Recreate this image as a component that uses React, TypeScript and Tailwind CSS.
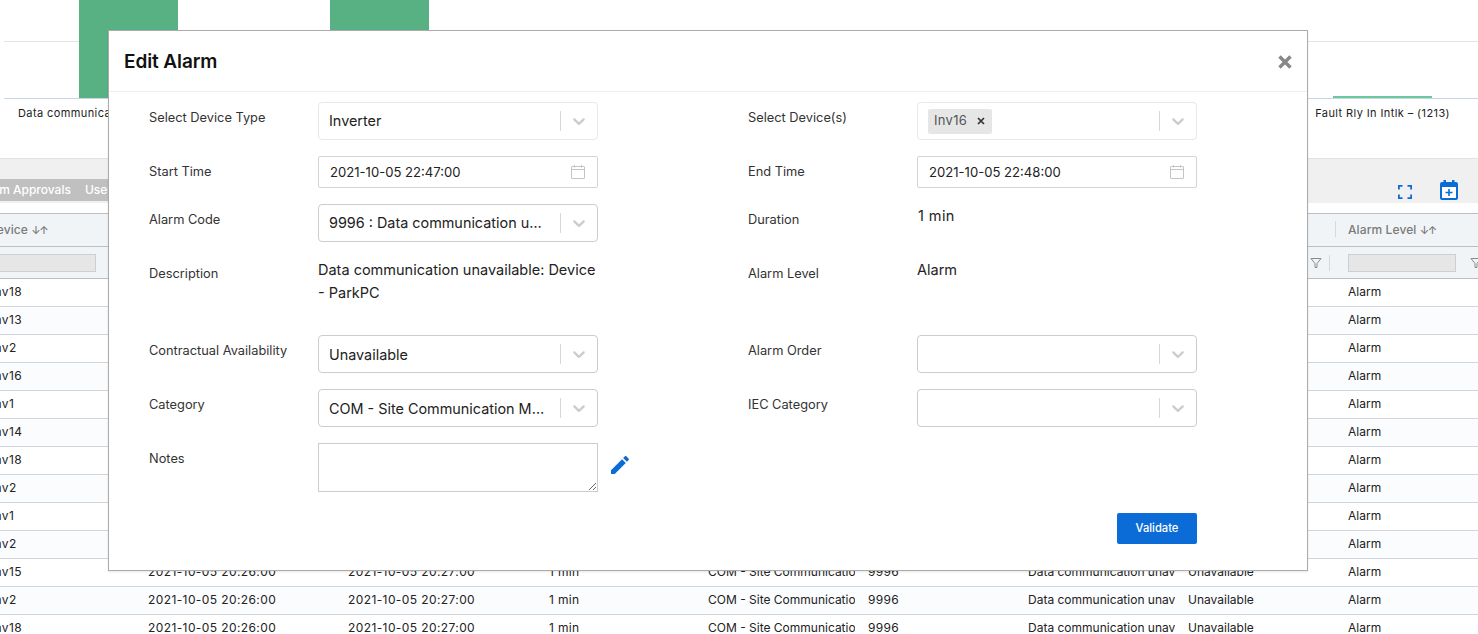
import React from "react";

const font = { fontFamily: "Inter, 'Liberation Sans', sans-serif" };

const Chevron = () => (
  <svg viewBox="0 0 20 20" className="w-[20px] h-[20px] fill-[#cccccc]">
    <path d="M4.516 7.548c0.436-0.446 1.043-0.481 1.576 0l3.908 3.747 3.908-3.747c0.533-0.481 1.141-0.446 1.574 0 0.436 0.445 0.408 1.197 0 1.615-0.406 0.418-4.695 4.502-4.695 4.502-0.217 0.223-0.502 0.335-0.787 0.335s-0.57-0.112-0.789-0.335c0 0-4.287-4.084-4.695-4.502s-0.436-1.17 0-1.615z" />
  </svg>
);

const Select = ({ value, light, low, children }: { value?: string; light?: boolean; low?: boolean; children?: React.ReactNode }) => (
  <div className={`w-[280px] h-[38px] rounded-[4px] border bg-white flex items-center ${light ? "border-[#e8e8e8]" : "border-[#cccccc]"}`}>
    <div className={`flex-1 min-w-0 pl-[10px] pr-[12px] truncate text-[14.4px] text-[#222] ${low ? "pt-[2px]" : ""}`}>
      {children ?? value}
    </div>
    <div className="w-px h-[20px] bg-[#d8d8d8]" />
    <div className="w-[36px] flex justify-center"><Chevron /></div>
  </div>
);

const DateInput = ({ value }: { value: string }) => (
  <div className="w-[280px] h-[32px] rounded-[2px] border border-[#d4d4d4] bg-white flex items-center justify-between pl-[11px] pr-[12px]">
    <span className="text-[13.1px] text-[#222] pt-[2px]">{value}</span>
    <svg viewBox="0 0 14 14" className="w-[14px] h-[14px] fill-none stroke-[#c4c4c4]" strokeWidth="1">
      <rect x="0.5" y="1.5" width="13" height="12" rx="0.5" />
      <path d="M0.5 4.5H13.5M3.5 0V2.5M10.5 0V2.5" />
    </svg>
  </div>
);

const Row = ({ h, children }: { h: string; children: React.ReactNode }) => (
  <div className={`flex ${h}`}>{children}</div>
);

const Cell = ({ label, children }: { label: string; children?: React.ReactNode }) => (
  <div className="w-[599px] flex shrink-0">
    <div className="w-[169px] shrink-0 pt-[6px] text-[12.8px] leading-[20px] text-[#333]">{label}</div>
    <div>{children}</div>
  </div>
);

const Value = ({ children }: { children: React.ReactNode }) => (
  <div className="w-[285px] text-[14.5px] leading-[23px] text-[#222]">{children}</div>
);

const Filter = () => (
  <svg viewBox="0 0 12 12" className="w-[12px] h-[12px] fill-none stroke-[#8a8a8a]" strokeWidth="1">
    <path d="M1 1.5H11L7 6.5V10.5H5V6.5Z" />
  </svg>
);

const cols = ["Device", "Start Time", "End Time", "Duration", "Category", "Alarm Code", "Description", "Contractual", "Alarm Level", "Alarm"];
const widths = "grid grid-cols-[200px_200px_200px_160px_160px_160px_160px_160px_160px_160px]";
const devices = ["Inv18", "Inv13", "Inv2", "Inv16", "Inv1", "Inv14", "Inv18", "Inv2", "Inv1", "Inv2", "Inv15", "Inv2", "Inv18"];

const Background = () => (
  <div>
    <div className="h-[158px] overflow-hidden">
      <svg width="1478" height="99" className="block">
        <rect x="4" y="41" width="1474" height="1" fill="#e4e4e4" />
        <rect x="79" y="0" width="99" height="98" fill="#58b183" />
        <rect x="330" y="0" width="99" height="98" fill="#58b183" />
        <rect x="1333" y="96" width="99" height="2" fill="#6cc79a" />
        <rect x="4" y="98" width="1474" height="1" fill="#c8d4ea" />
      </svg>
      <div className="flex justify-between pl-[18px] pr-[28px] pt-[7px] text-[11px] leading-[14px] tracking-[0.4px] text-[#222]">
        <span>Data communication unavailable – (2426)</span>
        <span>Fault Rly In Intlk – (1213)</span>
      </div>
    </div>
    <div className="h-[45px] bg-[#f0f0f0] border-t border-[#e2e2e2] pt-[20px] flex items-start justify-between overflow-hidden">
      <div className="h-[22px] w-[600px] bg-[#c0c0c0] flex items-center -ml-[24px] gap-[14px] text-[12px] font-medium text-white">
        <span>Alarm Approvals</span>
        <span>User Approvals</span>
      </div>
      <div className="flex items-center gap-[28px] pr-[20px] pt-[1px]">
        <svg viewBox="0 0 14 14" className="w-[14px] h-[14px] mt-[3px] fill-none stroke-[#0b6cd8]" strokeWidth="1.8">
          <path d="M0.9 4.5V0.9H4.5M9.5 0.9H13.1V4.5M13.1 9.5V13.1H9.5M4.5 13.1H0.9V9.5" />
        </svg>
        <svg viewBox="0 0 18 20" className="w-[18px] h-[20px]">
          <path d="M3.5 0H6V2H12V0H14.5V2H16A2 2 0 0 1 18 4V18A2 2 0 0 1 16 20H2A2 2 0 0 1 0 18V4A2 2 0 0 1 2 2H3.5Z" fill="#0b6cd8" />
          <rect x="2" y="7" width="14" height="11" fill="#ffffff" />
          <path d="M8.2 9H9.8V11.7H12.5V13.3H9.8V16H8.2V13.3H5.5V11.7H8.2Z" fill="#0b6cd8" />
        </svg>
      </div>
    </div>
    <div className="mt-[10px] -ml-[52px] w-[1700px]">
      <div className={`${widths} h-[34px] items-center bg-[#f1f4f6] border-t border-b border-[#b9bfc5] text-[12px] font-medium text-[#7a7a7a]`}>
        {cols.map((c, i) => (
          <div key={c} className={`tracking-[0.1px] relative ${i === 0 ? "pl-[40px]" : ""}`}>
            {i === 8 && <span className="absolute -left-[13px] top-0 w-px h-[16px] bg-[#d6d9dc]" />}
            {c} <span className="text-[11px] tracking-[-1.5px]">↓↑</span>
          </div>
        ))}
      </div>
      <div className={`${widths} h-[32px] items-center bg-[#f1f4f6] border-b border-[#b9bfc5]`}>
        {cols.map((c, i) => (
          <div key={c} className={`flex items-center ${i === 0 ? "pl-[42px]" : ""}`}>
            <div className={`${i === 0 ? "w-[106px]" : "w-[108px]"} h-[18px] bg-[#e6e6e6] border border-[#cfcfcf]`} />
            <div className="relative ml-[14px] flex items-center">
              <Filter />
              <span className="absolute left-[19px] -top-[2px] w-px h-[16px] bg-[#d6d9dc]" />
            </div>
          </div>
        ))}
      </div>
      {devices.map((d, r) => (
        <div
          key={r}
          className={`${widths} h-[28px] pb-[2px] items-center border-b border-[#d2d6da] text-[12px] text-[#222] ${r % 2 === 1 ? "bg-[#fbfcfe]" : "bg-white"}`}
        >
          <div className="pl-[43px] tracking-[0.35px]">{d}</div>
          <div className="tracking-[0.4px]">2021-10-05 20:26:00</div>
          <div className="tracking-[0.4px]">2021-10-05 20:27:00</div>
          <div className="pl-[1px] tracking-[0.35px]">1 min</div>
          <div className="w-[147px] overflow-hidden whitespace-nowrap">COM - Site Communication Mgmt</div>
          <div className="tracking-[0.35px]">9996</div>
          <div className="w-[147px] overflow-hidden whitespace-nowrap">Data communication unavailable</div>
          <div>Unavailable</div>
          <div>Alarm</div>
          <div>Alarm</div>
        </div>
      ))}
    </div>
  </div>
);

const Modal = () => (
  <div className="absolute left-[108px] top-[30px] w-[1200px] h-[541px] bg-white border border-[#ababab] shadow-[0_1px_2px_rgba(0,0,0,0.1)]">
    <div className="h-[61px] border-b border-[#eeeeee] flex items-center justify-between pl-[15px] pr-[15px]">
      <h2 className="text-[19px] font-semibold tracking-[-0.1px] text-[#111] pt-[2px]">Edit Alarm</h2>
      <svg viewBox="0 0 14 14" className="w-[14px] h-[14px] mt-[2px] stroke-[#888888]" strokeWidth="3.4">
        <path d="M1.5 1.5L12.5 12.5M12.5 1.5L1.5 12.5" />
      </svg>
    </div>
    <div className="pl-[40px] pt-[10px] flex flex-col gap-[16px]">
      <Row h="h-[38px]">
        <Cell label="Select Device Type"><Select value="Inverter" light /></Cell>
        <Cell label="Select Device(s)">
          <Select light>
            <span className="inline-flex items-center h-[25px] w-[64px] rounded-[2px] bg-[#e6e6e6] pl-[6px] text-[13px] text-[#555] tracking-[0.3px]">
              Inv16
              <svg viewBox="0 0 8 8" className="w-[8px] h-[8px] ml-[10px] stroke-[#333]" strokeWidth="1.7"><path d="M1 1L7 7M7 1L1 7" /></svg>
            </span>
          </Select>
        </Cell>
      </Row>
      <Row h="h-[32px]">
        <Cell label="Start Time"><DateInput value="2021-10-05 22:47:00" /></Cell>
        <Cell label="End Time"><DateInput value="2021-10-05 22:48:00" /></Cell>
      </Row>
      <Row h="h-[38px]">
        <Cell label="Alarm Code"><Select value="9996 : Data communication unavailable" /></Cell>
        <Cell label="Duration"><Value><span className="pl-[1px] tracking-[0.4px]">1 min</span></Value></Cell>
      </Row>
      <Row h="h-[61px]">
        <Cell label="Description"><Value>Data communication unavailable: Device - ParkPC</Value></Cell>
        <Cell label="Alarm Level"><Value>Alarm</Value></Cell>
      </Row>
      <Row h="h-[38px]">
        <Cell label="Contractual Availability"><Select value="Unavailable" low /></Cell>
        <Cell label="Alarm Order"><Select /></Cell>
      </Row>
      <Row h="h-[38px]">
        <Cell label="Category"><Select value="COM - Site Communication Mgmt" low /></Cell>
        <Cell label="IEC Category"><Select /></Cell>
      </Row>
      <Row h="h-[49px]">
        <Cell label="Notes">
          <div className="flex items-start">
            <textarea className="w-[280px] h-[49px] border border-[#cccccc] bg-white block outline-none" />
            <svg viewBox="0 0 24 24" className="w-[24px] h-[24px] ml-[10px] mt-[10px] fill-[#0b6cd8]">
              <path d="M3 17.25V21h3.75L17.81 9.94l-3.75-3.75L3 17.25zM20.71 7.04c.39-.39.39-1.02 0-1.41l-2.34-2.34c-.39-.39-1.02-.39-1.41 0l-1.83 1.83 3.75 3.75 1.83-1.83z" />
            </svg>
          </div>
        </Cell>
      </Row>
    </div>
    <div className="flex justify-end pr-[110px] mt-[21px]">
      <button className="w-[80px] h-[31px] rounded-[2px] bg-[#0b6cd8] text-white text-[11.2px] font-medium">Validate</button>
    </div>
  </div>
);

export default function App() {
  return (
    <div className="relative w-[1478px] h-[634px] overflow-hidden bg-white" style={font}>
      <Background />
      <Modal />
    </div>
  );
}
